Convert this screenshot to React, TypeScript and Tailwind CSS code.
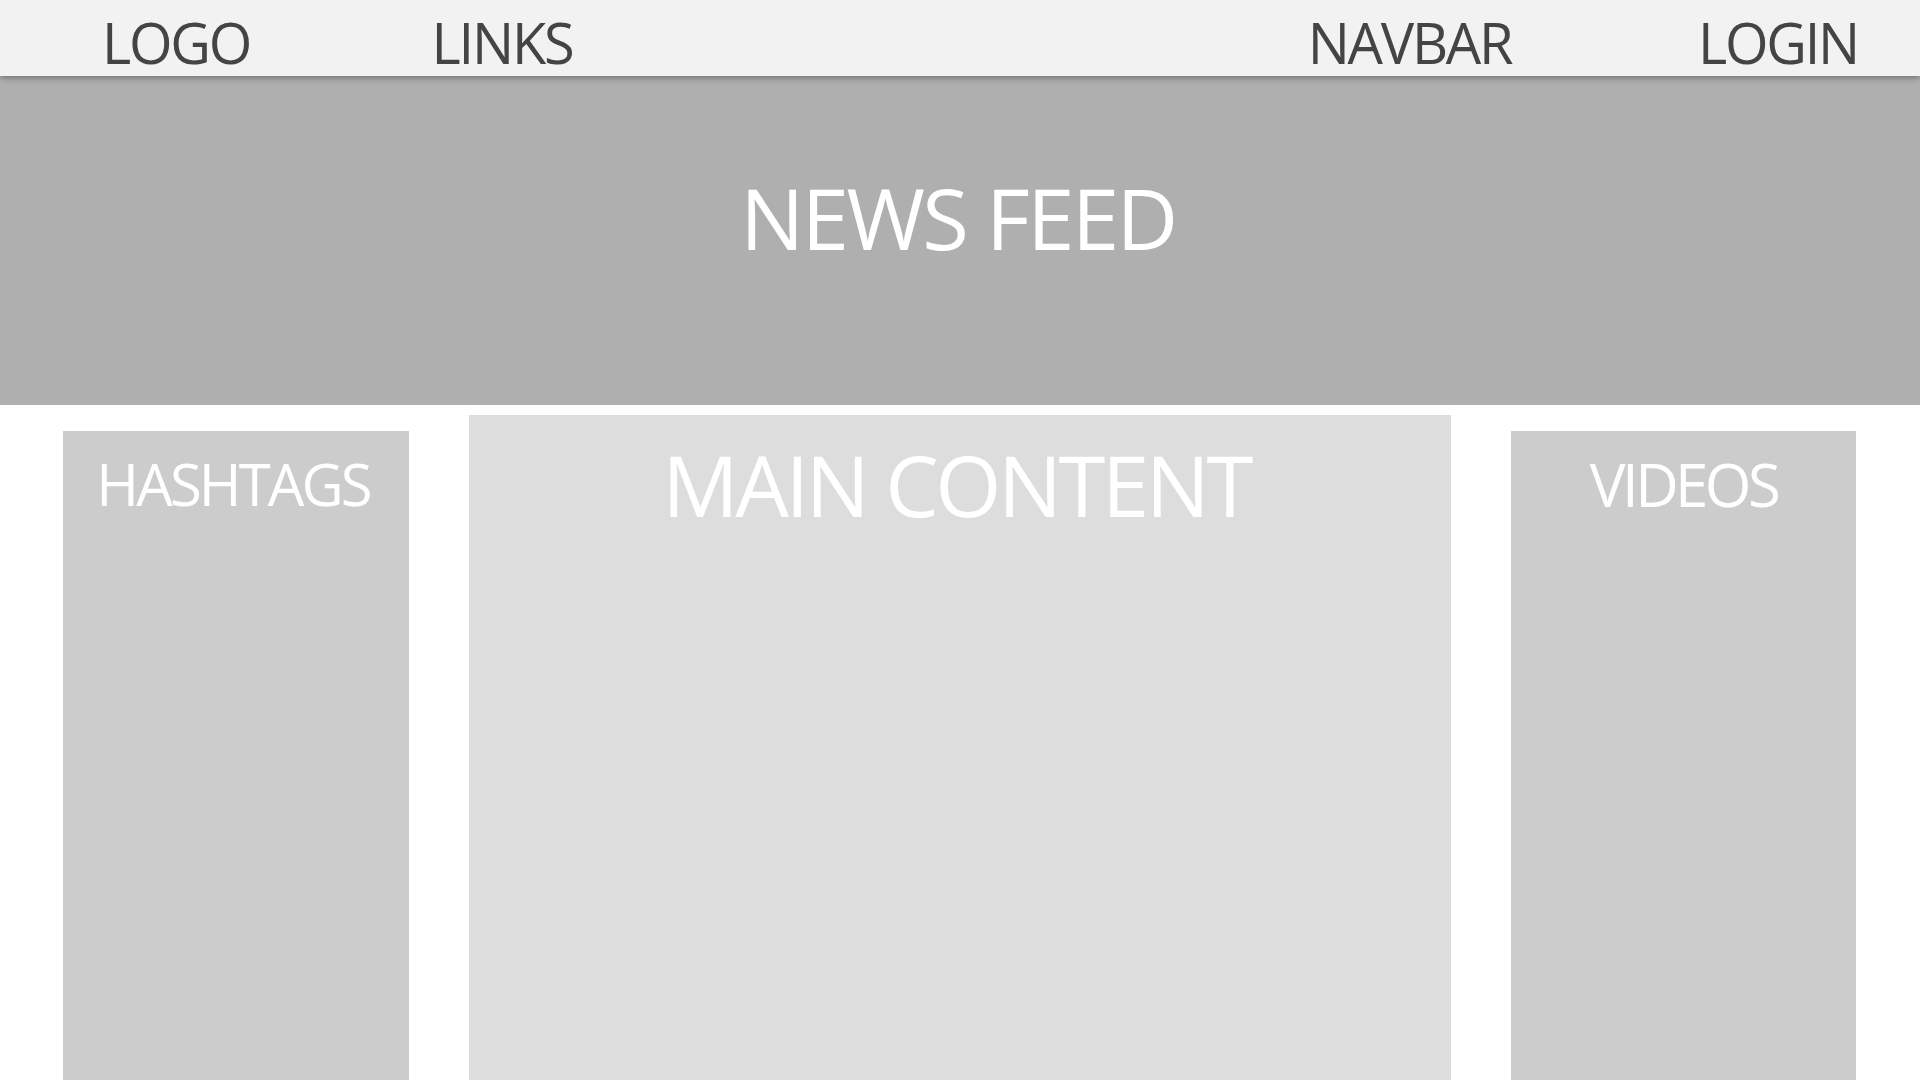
import React from "react";

const font = { fontFamily: '"Open Sans", "Noto Sans", sans-serif' };

export default function App() {
  return (
    <div
      className="flex h-[1080px] w-[1920px] flex-col overflow-hidden bg-white"
      style={font}
    >
      {/* Navbar */}
      <header className="relative z-10 flex h-[76px] shrink-0 bg-[#f2f2f2] text-[56px] leading-none tracking-[-0.04em] text-[#444444] shadow-[0_2px_6px_rgba(0,0,0,0.35)]">
        <div className="w-[352px] pt-[14px] text-center">LOGO</div>
        <div className="w-[300px] pt-[14px] text-center">LINKS</div>
        <div className="flex-1" />
        <div className="w-[301px] pt-[14px] text-center">NAVBAR</div>
        <div className="w-[76px]" />
        <div className="w-[284px] pt-[14px] text-center">LOGIN</div>
      </header>

      {/* News feed */}
      <section className="h-[329px] shrink-0 bg-[#afafaf] pt-[99px] pr-[4px] text-center text-[85px] leading-none tracking-[-0.03em] text-white">
        NEWS FEED
      </section>

      {/* Content row */}
      <div className="flex flex-1 gap-[60px] pl-[63px] pr-[64px]">
        <aside className="mt-[26px] w-[346px] shrink-0 bg-[#cccccc] pt-[24px] pr-[6px] text-center text-[58px] leading-none tracking-[-0.05em] text-white">
          HASHTAGS
        </aside>
        <main className="mt-[10px] flex-1 bg-[#dddddd] pt-[27px] pr-[8px] text-center text-[85px] leading-none tracking-[-0.04em] text-white">
          MAIN CONTENT
        </main>
        <aside className="mt-[26px] w-[345px] shrink-0 bg-[#cccccc] pt-[23px] text-center text-[60px] leading-none tracking-[-0.06em] text-white">
          VIDEOS
        </aside>
      </div>
    </div>
  );
}
